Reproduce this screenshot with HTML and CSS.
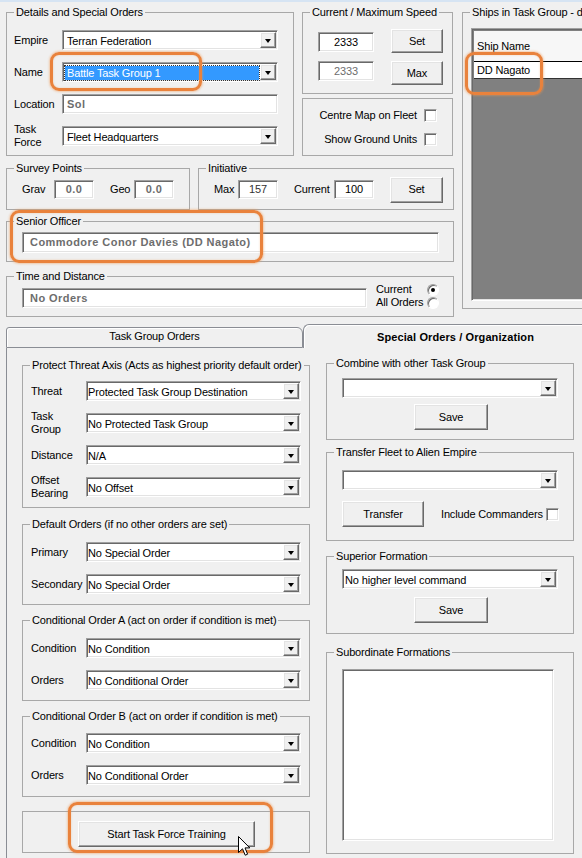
FILE: index.html
```html
<!DOCTYPE html>
<html>
<head>
<meta charset="utf-8">
<title>Task Group</title>
<link rel="stylesheet" href="styles.css">
</head>
<body>
<div class="topstrip"></div>
<div class="top">
  <div class="leftblock">
    <div class="row1">
      <div class="group g-details">
        <div class="gtitle">Details and Special Orders</div>
        <div class="gb pd-details">
          <div class="frow"><span class="lbl l48">Empire</span><div class="combo c216 sunk"><span class="ctext">Terran Federation</span><span class="dd"></span></div></div>
          <div class="frow"><span class="lbl l48">Name</span><div class="combo c216 sunk"><span class="ctext sel">Battle Task Group 1</span><span class="dd"></span></div></div>
          <div class="frow"><span class="lbl l48">Location</span><div class="tbox c216 sunk dis">Sol</div></div>
          <div class="frow"><span class="lbl l48">Task<br>Force</span><div class="combo c216 sunk"><span class="ctext">Fleet Headquarters</span><span class="dd"></span></div></div>
        </div>
      </div>
      <div class="midcol">
        <div class="group g-speed">
          <div class="gtitle">Current / Maximum Speed</div>
          <div class="gb pd-speed">
            <div class="sprow r1"><div class="tbox num sunk">2333</div><div class="btn b52">Set</div></div>
            <div class="sprow r2"><div class="tbox num sunk grayt">2333</div><div class="btn b52">Max</div></div>
          </div>
        </div>
        <div class="group g-checks">
          <div class="gb pd-checks">
            <div class="ckrow"><span>Centre Map on Fleet</span><span class="ck sunk"></span></div>
            <div class="ckrow"><span>Show Ground Units</span><span class="ck sunk"></span></div>
          </div>
        </div>
      </div>
    </div>
    <div class="row2">
      <div class="group g-survey">
        <div class="gtitle">Survey Points</div>
        <div class="gb pd-survey">
          <span class="lbl l32">Grav</span><div class="tbox small sunk dis num">0.0</div>
          <span class="lbl l24 ml16">Geo</span><div class="tbox small sunk dis num">0.0</div>
        </div>
      </div>
      <div class="group g-init">
        <div class="gtitle">Initiative</div>
        <div class="gb pd-init">
          <span class="lbl l24">Max</span><div class="tbox small sunk num dk">157</div>
          <span class="lbl l40 ml16">Current</span><div class="tbox small sunk num">100</div>
          <div class="btn b53 ml16">Set</div>
        </div>
      </div>
    </div>
    <div class="group g-senior">
      <div class="gtitle">Senior Officer</div>
      <div class="gb pd-senior">
        <div class="tbox sunk dis wide">Commodore Conor Davies (DD Nagato)</div>
      </div>
    </div>
    <div class="group g-time">
      <div class="gtitle">Time and Distance</div>
      <div class="gb pd-time">
        <div class="tbox sunk dis tdbox">No Orders</div>
        <div class="radios">
          <div class="rrow"><span>Current</span><span class="rb on"></span></div>
          <div class="rrow"><span>All Orders</span><span class="rb"></span></div>
        </div>
      </div>
    </div>
  </div>
  <div class="group g-ships">
    <div class="gtitle">Ships in Task Group - d</div>
    <div class="gb pd-ships">
      <div class="lv sunk">
        <div class="lv-head">Ship Name</div>
        <div class="lv-row">DD Nagato</div>
        <div class="lv-empty"></div>
      </div>
    </div>
  </div>
</div>

<div class="tabstrip">
  <div class="tab1">Task Group Orders</div>
  <div class="tab2">Special Orders / Organization</div>
</div>
<div class="tabpage">
  <div class="col-left">
    <div class="group g-protect">
      <div class="gtitle">Protect Threat Axis (Acts as highest priority default order)</div>
      <div class="gb pd-protect">
        <div class="frow"><span class="lbl l55">Threat</span><div class="combo c215 sunk"><span class="ctext tp">Protected Task Group Destination</span><span class="dd"></span></div></div>
        <div class="frow"><span class="lbl l55">Task<br>Group</span><div class="combo c215 sunk"><span class="ctext tp">No Protected Task Group</span><span class="dd"></span></div></div>
        <div class="frow"><span class="lbl l55">Distance</span><div class="combo c215 sunk"><span class="ctext tp">N/A</span><span class="dd"></span></div></div>
        <div class="frow"><span class="lbl l55">Offset<br>Bearing</span><div class="combo c215 sunk"><span class="ctext tp">No Offset</span><span class="dd"></span></div></div>
      </div>
    </div>
    <div class="group g-default">
      <div class="gtitle">Default Orders (if no other orders are set)</div>
      <div class="gb pd-17">
        <div class="frow"><span class="lbl l55">Primary</span><div class="combo c215 sunk"><span class="ctext tp">No Special Order</span><span class="dd"></span></div></div>
        <div class="frow"><span class="lbl l55">Secondary</span><div class="combo c215 sunk"><span class="ctext tp">No Special Order</span><span class="dd"></span></div></div>
      </div>
    </div>
    <div class="group g-cond">
      <div class="gtitle">Conditional Order A (act on order if condition is met)</div>
      <div class="gb pd-17">
        <div class="frow"><span class="lbl l55">Condition</span><div class="combo c215 sunk"><span class="ctext tp">No Condition</span><span class="dd"></span></div></div>
        <div class="frow"><span class="lbl l55">Orders</span><div class="combo c215 sunk"><span class="ctext tp">No Conditional Order</span><span class="dd"></span></div></div>
      </div>
    </div>
    <div class="group g-cond">
      <div class="gtitle">Conditional Order B (act on order if condition is met)</div>
      <div class="gb pd-16">
        <div class="frow"><span class="lbl l55">Condition</span><div class="combo c215 sunk"><span class="ctext tp">No Condition</span><span class="dd"></span></div></div>
        <div class="frow"><span class="lbl l55">Orders</span><div class="combo c215 sunk"><span class="ctext tp">No Conditional Order</span><span class="dd"></span></div></div>
      </div>
    </div>
    <div class="group g-train">
      <div class="gb pd-train">
        <div class="btn b177">Start Task Force Training</div>
      </div>
    </div>
  </div>
  <div class="col-right">
    <div class="group g-combine">
      <div class="gtitle">Combine with other Task Group</div>
      <div class="gb pd-combine">
        <div class="combo c216 sunk"><span class="ctext"></span><span class="dd"></span></div>
        <div class="btn b74 savebtn">Save</div>
      </div>
    </div>
    <div class="group g-transfer">
      <div class="gtitle">Transfer Fleet to Alien Empire</div>
      <div class="gb pd-transfer">
        <div class="combo c216 sunk"><span class="ctext"></span><span class="dd"></span></div>
        <div class="trow">
          <div class="btn b82">Transfer</div>
          <span class="inc">Include Commanders</span>
          <span class="ck sunk"></span>
        </div>
      </div>
    </div>
    <div class="group g-superior">
      <div class="gtitle">Superior Formation</div>
      <div class="gb pd-superior">
        <div class="combo c216 sunk"><span class="ctext tp2">No higher level command</span><span class="dd"></span></div>
        <div class="btn b74 savebtn2">Save</div>
      </div>
    </div>
    <div class="group g-sub">
      <div class="gtitle">Subordinate Formations</div>
      <div class="gb pd-sub">
        <div class="listbox sunk"></div>
      </div>
    </div>
  </div>
</div>

<div class="hl hl-name"></div>
<div class="hl hl-ship"></div>
<div class="hl hl-senior"></div>
<div class="hl hl-train"></div>
<svg class="cursor" width="13" height="21" viewBox="0 0 13 21"><path d="M0.5 0.5 L0.5 16.5 L4.5 12.8 L7.2 19.2 L9.6 18.2 L7 11.9 L11.8 11.9 Z" fill="#fff" stroke="#000" stroke-width="1" stroke-linejoin="miter"/></svg>
</body>
</html>
```

FILE: styles.css
```css
* { box-sizing: border-box; }
html, body { margin: 0; padding: 0; }
body {
  width: 582px;
  height: 858px;
  overflow: hidden;
  position: relative;
  background: #f0f0f0;
  font-family: "Liberation Sans", Arial, sans-serif;
  font-size: 11px;
  letter-spacing: -0.15px;
  color: #000;
  line-height: 13px;
}
.topstrip { height: 2px; background: #d6e4f3; }

/* generic controls */
.group { border: 1px solid #a8a8a8; flex: none; }
.gtitle {
  height: 13px;
  line-height: 13px;
  margin: -7px 0 -6px 7px;
  padding: 0 2px;
  background: #f0f0f0;
  width: fit-content;
  white-space: nowrap;
}
.sunk {
  background: #fff;
  border: 1px solid;
  border-color: #a0a0a0 #ffffff #ffffff #a0a0a0;
  box-shadow: inset 1px 1px 0 #696969, inset -1px -1px 0 #e3e3e3;
}
.lbl { flex: none; white-space: nowrap; }
.l24 { width: 24px; }
.l32 { width: 32px; }
.l40 { width: 40px; }
.l48 { width: 48px; }
.l55 { width: 55px; }
.ml16 { margin-left: 16px; }

.frow { display: flex; align-items: center; height: 20px; margin-bottom: 12px; }
.combo { display: flex; align-items: flex-start; height: 20px; flex: none; }
.c216 { width: 216px; }
.c215 { width: 215px; }
.ctext {
  flex: 1;
  height: 14px;
  margin: 3px 1px 0 2px;
  padding-left: 2px;
  line-height: 14px;
  white-space: nowrap;
  overflow: hidden;
}
.ctext.tp { margin-left: 1px; padding-left: 0; }
.ctext.tp2 { margin-left: 1px; padding-left: 1px; }
.ctext.sel {
  background: #3399ff;
  color: #fff;
  outline: 1px dotted #333;
  outline-offset: 0;
}
.dd {
  flex: none;
  width: 16px;
  height: 16px;
  margin: 1px 1px 0 0;
  background: #f0f0f0;
  border: 1px solid;
  border-color: #ffffff #696969 #696969 #ffffff;
  box-shadow: inset -1px -1px 0 #a0a0a0, inset 1px 1px 0 #e3e3e3;
  display: flex;
  align-items: center;
  justify-content: center;
}
.dd::after {
  content: "";
  border-style: solid;
  border-width: 4px 3.5px 0 3.5px;
  border-color: #000 transparent transparent transparent;
  margin-top: 1px;
}
.tbox {
  height: 20px;
  padding: 3px 0 0 4px;
  line-height: 13px;
  white-space: nowrap;
  overflow: hidden;
  flex: none;
}
.tbox.dis { color: #6d6d6d; font-weight: bold; letter-spacing: 0.45px; }
.tbox.num { text-align: center; padding-left: 0; }
.grayt { color: #6d6d6d; }
.dk { color: #333; }
.btn {
  flex: none;
  display: flex;
  align-items: center;
  justify-content: center;
  background: #f0f0f0;
  border: 1px solid;
  border-color: #ffffff #696969 #696969 #ffffff;
  box-shadow: inset -1px -1px 0 #a0a0a0, inset 1px 1px 0 #e3e3e3;
  white-space: nowrap;
}
.b52 { width: 52px; height: 24px; }
.b53 { width: 53px; height: 26px; }
.b74 { width: 74px; height: 26px; }
.b82 { width: 82px; height: 26px; }
.b177 { width: 177px; height: 26px; }
.ck { width: 13px; height: 13px; flex: none; }
.rb {
  width: 12px;
  height: 12px;
  border-radius: 50%;
  flex: none;
  background: #fff;
  border: 1px solid;
  border-color: #a0a0a0 #ffffff #ffffff #a0a0a0;
  box-shadow: inset 1px 1px 0 #696969;
  display: flex;
  align-items: center;
  justify-content: center;
}
.rb.on::after {
  content: "";
  width: 4px;
  height: 4px;
  border-radius: 50%;
  background: #000;
}

/* top area */
.top { display: flex; gap: 8px; padding: 10px 0 0 6px; align-items: flex-start; }
.leftblock { width: 448px; flex: none; display: flex; flex-direction: column; }
.row1 { display: flex; gap: 8px; }
.g-details { width: 288px; height: 144px; }
.pd-details { padding: 17px 0 0 7px; }
.midcol { display: flex; flex-direction: column; }
.g-speed { width: 151px; height: 82px; }
.pd-speed { padding: 16px 0 0 15px; }
.sprow { display: flex; gap: 17px; align-items: flex-start; }
.sprow .tbox { width: 56px; }
.sprow.r1 .tbox { margin-top: 3px; }
.sprow.r2 { margin-top: 8px; }
.g-checks { width: 151px; height: 58px; margin-top: 4px; }
.pd-checks { padding: 10px 15px 0 0; }
.ckrow { display: flex; justify-content: flex-end; align-items: center; gap: 7px; height: 13px; margin-bottom: 11px; }

.row2 { display: flex; gap: 8px; margin-top: 12px; }
.g-survey { width: 184px; height: 42px; }
.pd-survey { display: flex; align-items: center; padding: 11px 0 0 15px; }
.tbox.small { width: 40px; height: 19px; padding-top: 2px; }
.g-init { width: 256px; height: 42px; }
.pd-init { display: flex; align-items: center; height: 41px; padding: 0 0 0 15px; margin-top: -6px; }
.g-senior { width: 448px; height: 41px; margin-top: 11px; }
.pd-senior { padding: 10px 0 0 15px; }
.wide { width: 417px; height: 21px; padding-left: 7px; padding-top: 3px; }
.g-time { width: 448px; height: 41px; margin-top: 14px; }
.pd-time { display: flex; padding: 11px 0 0 15px; }
.tdbox { width: 345px; height: 20px; padding-left: 7px; }
.radios { margin: -5px 0 0 9px; width: 63px; }
.rrow { display: flex; justify-content: space-between; align-items: center; height: 13px; }

.g-ships { width: 160px; height: 297px; }
.pd-ships { padding: 15px 0 0 8px; }
.lv { width: 200px; height: 273px; padding: 2px; background: #808080; display: flex; flex-direction: column; }
.lv-head { height: 30px; background: #f7f7f7; line-height: 30px; padding-left: 3px; }
.lv-row { height: 18px; background: #fff; border-top: 1px solid #000; border-bottom: 1px solid #333; padding-left: 3px; line-height: 16px; }
.lv-empty { flex: 1; background: #808080; }

/* tabs */
.tabstrip { display: flex; align-items: flex-end; height: 24px; margin: 7px 0 0 6px; }
.tab1 {
  flex: none;
  width: 297px;
  height: 21px;
  border: 1px solid #8a8d94;
  border-radius: 3px 6px 0 0;
  text-align: center;
  line-height: 17px;
  background: #f0f0f0;
  box-shadow: inset 1px 1px 0 #fff;
}
.tab2 {
  width: 304px;
  height: 24px;
  flex: none;
  border: 1px solid #8a8d94;
  border-bottom: none;
  border-right: none;
  border-radius: 6px 0 0 0;
  font-weight: bold;
  letter-spacing: 0.1px;
  text-align: center;
  line-height: 24px;
  background: #f0f0f0;
  box-shadow: inset 1px 1px 0 #fff;
}
.tabpage {
  margin-left: 6px;
  border-left: 1px solid #8a8d94;
  height: 520px;
  display: flex;
  gap: 16px;
  padding-left: 15px;
}
.col-left { width: 288px; flex: none; padding-top: 17px; }
.col-right { width: 248px; flex: none; padding-top: 15px; }
.col-left .group, .col-right .group { width: 100%; }
.g-protect { height: 143px; }
.pd-protect { padding: 15px 0 0 8px; }
.pd-17 { padding: 17px 0 0 8px; }
.pd-16 { padding: 16px 0 0 8px; }
.g-default { height: 81px; margin-top: 16px; }
.g-cond { height: 81px; margin-top: 15px; }
.g-train { height: 42px; margin-top: 14px; }
.pd-train { padding: 9px 0 0 55px; }

.g-combine { height: 77px; }
.pd-combine { padding: 14px 0 0 15px; }
.savebtn { margin: 6px 0 0 72px; }
.g-transfer { height: 89px; margin-top: 12px; }
.pd-transfer { padding: 17px 0 0 15px; }
.trow { display: flex; align-items: center; width: 217px; margin-top: 11px; }
.inc { margin-left: 17px; flex: 1; }
.g-superior { height: 78px; margin-top: 15px; }
.pd-superior { padding: 12px 0 0 15px; }
.savebtn2 { margin: 8px 0 0 72px; }
.g-sub { height: 202px; margin-top: 18px; }
.pd-sub { padding: 16px 0 0 15px; }
.listbox { width: 212px; height: 172px; }

/* annotation overlays */
.hl {
  position: absolute;
  border: 3px solid #e9823c;
  border-radius: 9px;
  box-shadow: 0 0 2px 1px rgba(240, 150, 80, 0.45), inset 0 0 2px rgba(240, 150, 80, 0.45);
}
.hl-name { left: 50px; top: 52px; width: 152px; height: 39px; }
.hl-ship { left: 465px; top: 52px; width: 78px; height: 43px; }
.hl-senior { left: 10px; top: 210px; width: 253px; height: 53px; }
.hl-train { left: 68px; top: 802px; width: 205px; height: 51px; }
.cursor { position: absolute; left: 238px; top: 836px; }
```
